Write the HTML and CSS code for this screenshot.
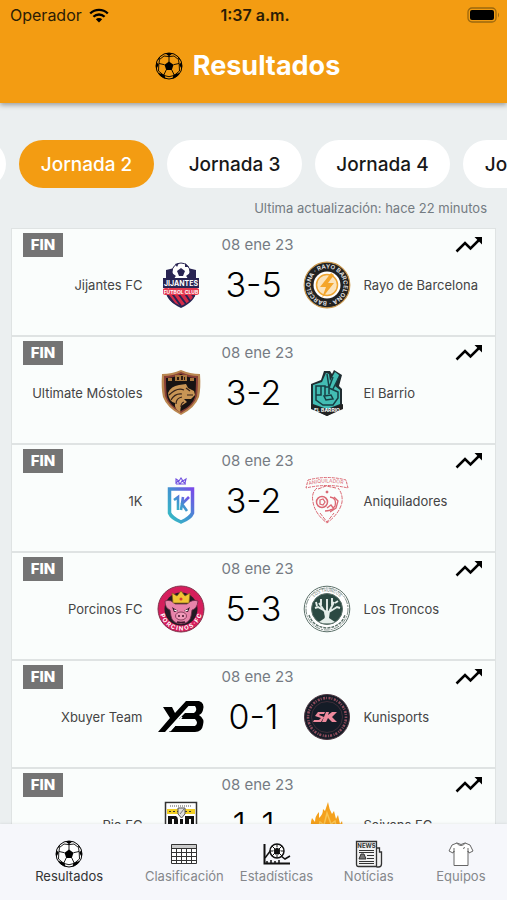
FILE: index.html
```html
<!DOCTYPE html>
<html lang="es">
<head>
<meta charset="utf-8">
<meta name="viewport" content="width=device-width, initial-scale=1">
<title>Resultados</title>
<link rel="stylesheet" href="styles.css">
</head>
<body>
<svg class="defs" aria-hidden="true">
  <symbol id="ball" viewBox="0 0 28 28">
    <clipPath id="ball-clip"><circle cx="14" cy="14" r="13"/></clipPath>
    <g clip-path="url(#ball-clip)" fill="#000">
      <path d="M14 9.4l4.5 3.3-1.7 5.3h-5.6l-1.7-5.3z"/>
      <path d="M9.2.5h9.6L14 4.2zM27.8 9l-.5 9.3-3.1-5.8zM0.2 9l.5 9.3 3.1-5.8zM24 24l-7 4 1.6-5.2 5.6-1.7zM4 24l7 4-1.6-5.2-5.6-1.7zM22.5 3.5l4 5-3.1-1.4zM5.500 3.5l-4 5 3.1-1.4z"/>
      <path d="M14 4v6M9.500 12.700L4 11.500M18.500 12.700L24 11.500M11.200 18l-2.400 5M16.800 18l2.400 5M14 4.600L19 4l4.500 3.500.7 5L24.500 19l-5.500 4.500-5 1.200-5-1.200L3.500 19l.3-6.500.7-5L9 4z" fill="none" stroke="#000" stroke-width=".9"/>
    </g>
    <circle cx="14" cy="14" r="13" fill="none" stroke="#000" stroke-width="1"/>
  </symbol>
  <symbol id="trend" viewBox="0 0 28 18">
    <path d="M1.500 15.500L10 7l5.500 5.500L25 3" fill="none" stroke="#000" stroke-width="2.500"/>
    <path d="M19.500 1H27v7.500z"/>
  </symbol>
</svg>
<div class="app">
  <header class="header">
    <div class="status">
      <div class="carrier">Operador
        <svg class="wifi" viewBox="0 0 20 15"><path d="M1.200 5.500a12.500 12.500 0 0 1 17.600 0M4.400 8.800a8 8 0 0 1 11.200 0" fill="none" stroke="#000" stroke-width="2.300"/><path d="M10 14.500l-3.200-3.200a4.500 4.500 0 0 1 6.400 0z"/></svg>
      </div>
      <time>1:37 a.m.</time>
      <svg class="battery" viewBox="0 0 33 16"><rect x="1" y="1" width="28" height="14" rx="4" fill="none" stroke="#9b680f" stroke-width="1.300"/><rect x="3" y="3" width="24" height="10" rx="2"/><path d="M31 5.500q2 2.500 0 5z" fill="#9b680f"/></svg>
    </div>
    <h1 class="title"><svg class="title-ball"><use href="#ball"/></svg>Resultados</h1>
  </header>

  <main class="content">
    <div class="rounds">
      <button class="round">Jornada 1</button>
      <button class="round active">Jornada 2</button>
      <button class="round">Jornada 3</button>
      <button class="round">Jornada 4</button>
      <button class="round">Jornada 5</button>
    </div>
    <p class="updated">Ultima actualización: hace 22 minutos</p>

    <section class="matches">
      <article class="match">
        <div class="meta"><span class="badge">FIN</span><span class="date">08 ene 23</span><svg class="trend"><use href="#trend"/></svg></div>
        <div class="teams">
          <span class="home">Jijantes FC</span>
          <svg class="crest" viewBox="0 0 48 48">
            <path d="M9 9q8-1 15-5 7 4 15 5v21q0 10-15 17Q9 40 9 30z" fill="#292553"/>
            <path d="M10 30h28q0 9-14 15-14-6-14-15z" fill="#d52b49"/>
            <path d="M14 31l10 14M20 31l9 12M27 31l6 9M10 33l7 9M33 31l4 5" stroke="#292553" stroke-width="2"/>
            <circle cx="24" cy="11" r="9" fill="#fff" stroke="#292553"/>
            <path d="M24 7l4 3-2 5h-4l-2-5zM18 3l4-1-2 4zM28 2l4 4-4 0zM15 12l4 3-3 3zM33 12l-4 3 3 3z" fill="#292553"/>
            <path d="M6 17h36v10H6z" fill="#292553"/>
            <text x="24" y="25" class="jijantes">JIJANTES</text>
            <path d="M6 28l2-1h32l2 1v5l-2 1H8l-2-1z" fill="#e43a50"/>
            <text x="24" y="33" class="jijantes-sub">FÚTBOL CLUB</text>
          </svg>
          <strong class="score">3-5</strong>
          <svg class="crest" viewBox="0 0 48 48">
            <defs><path id="rayo-ring" d="M24 40.500a16.500 16.500 0 1 1 .1 0"/></defs>
            <circle cx="24" cy="24" r="22.800" fill="#222" stroke="#c9964a" stroke-width="1.200"/>
            <circle cx="24" cy="24" r="13.500" fill="#fff"/>
            <circle cx="24" cy="24" r="10.500" fill="#fbe3bb" stroke="#efa631" stroke-width="1.500"/>
            <path d="M28 12l-11 14h6l-4 11 12-15h-6l6-8z" fill="#f4a529"/>
            <text class="rayo"><textPath href="#rayo-ring">BARCELONA · RAYO BARCELONA ·</textPath></text>
          </svg>
          <span class="away">Rayo de Barcelona</span>
        </div>
      </article>

      <article class="match">
        <div class="meta"><span class="badge">FIN</span><span class="date">08 ene 23</span><svg class="trend"><use href="#trend"/></svg></div>
        <div class="teams">
          <span class="home">Ultimate Móstoles</span>
          <svg class="crest" viewBox="0 0 48 48">
            <path d="M5 5q10 0 19-4 9 4 19 4 1 14-1 23-4 11-18 18Q10 39 6 28 4 19 5 5z" fill="#ba8750"/>
            <path d="M7 7q9 0 17-4 8 4 17 4 0 12-1 20-3 10-16 17Q11 37 8 27 7 19 7 7z" fill="#883f36"/>
            <path d="M9 9q8 0 15-4 7 4 15 4 0 12-1 19-3 9-14 14-11-5-14-14Q9 21 9 9z" fill="#171313"/>
            <path d="M18 6h12v6H18zM11 9h4v3h-4zM33 9h4v3h-4z" fill="#a9783e"/>
            <path d="M20 8h2v3h-2zM24 7h2v4h-2zM27 8h1v3h-1z" fill="#2b1b13"/>
            <path d="M11 24q3-7 11-8l7-1 2 4 6 3 1 4-4 4h-7l3 3-6 4-1 6q-6-3-5-9-6-1-7-10z" fill="#c89555"/>
            <path d="M12 26q8-8 15-5M14 31q4-7 11-6M19 35q0-6 6-7M29 19l4 3M30 26l6 0M24 38q0-4 3-5" fill="none" stroke="#35221a" stroke-width="1.200"/>
          </svg>
          <strong class="score">3-2</strong>
          <svg class="crest" viewBox="0 0 48 48">
            <path d="M8 15l10-4 3-9 6 0 2 3 2-4 8 5-3 11 3 3v19L24 47 8 39z" fill="#202d31"/>
            <path d="M10 16l9-3 4-9 3 1 1 7 5-9 4 3-4 11 5 4v14l-13 5-14-5z" fill="#43bdb4"/>
            <path d="M13 17h5v9h-5zM18 17h4v9M22 18h4v7M13 25v6l7 5h10l5-7v-6l-9-4M21 27l7-1 2 4-7 1zM24 5l2 13M30 8l-4 11M36 8l-6 12" fill="none" stroke="#173e43" stroke-width="1.500"/>
            <path d="M8 35l16 6 16-6v5L24 47 8 40z" fill="#222"/>
            <text x="24" y="43" class="barrio">EL BARRIO</text>
          </svg>
          <span class="away">El Barrio</span>
        </div>
      </article>

      <article class="match">
        <div class="meta"><span class="badge">FIN</span><span class="date">08 ene 23</span><svg class="trend"><use href="#trend"/></svg></div>
        <div class="teams">
          <span class="home">1K</span>
          <svg class="crest" viewBox="0 0 48 48">
            <defs><linearGradient id="k-fill" x1="1" y1="0" x2="0" y2="1"><stop stop-color="#794ce9"/><stop offset=".5" stop-color="#4292d0"/><stop offset="1" stop-color="#35bfc3"/></linearGradient></defs>
            <path d="M19 2l3 2 2-3 2 3 3-2-1 4-3-2-2 3-2-3-2 2zM19 7h10" fill="none" stroke="#704fe0" stroke-width="1.100"/>
            <path d="M12.500 12h23v24q-2 5-11.500 9-9.500-4-11.500-9z" fill="#fff" stroke="url(#k-fill)" stroke-width="3.500"/>
            <path d="M17 23l4-3v13M26 20l-2 13M32 20l-7 7 5 7" fill="none" stroke="url(#k-fill)" stroke-width="2.600"/>
          </svg>
          <strong class="score">3-2</strong>
          <svg class="crest" viewBox="0 0 48 48" fill="none" stroke="#db6873">
            <defs><path id="aniq-arch" d="M6 8q18-5 38 0"/></defs>
            <path d="M5 3q19-5 38 0l2 8q-21-5-42 0z" stroke-dasharray="3 1"/>
            <text class="aniq"><textPath href="#aniq-arch">ANIQUILADOR</textPath></text>
            <path d="M14 11q-6 5-4 14 2 12 14 21 13-10 15-21 1-8-4-14M15 12l8-3 10 2M17 36l7 9 7-9" stroke-dasharray="4 1"/>
            <circle cx="19" cy="25" r="5.500" stroke-width="1.500"/>
            <path d="M17 23l3-1 2 3-2 3-3-1zM27 20q7 1 5 9-3 5-10 5M31 20l4 4-2 7-6 4M24 31l4-3 3 4" stroke-width="1.300"/>
            <circle cx="24" cy="15" r="1" fill="#ce4050"/>
          </svg>
          <span class="away">Aniquiladores</span>
        </div>
      </article>

      <article class="match">
        <div class="meta"><span class="badge">FIN</span><span class="date">08 ene 23</span><svg class="trend"><use href="#trend"/></svg></div>
        <div class="teams">
          <span class="home">Porcinos FC</span>
          <svg class="crest" viewBox="0 0 48 48">
            <defs><path id="porc-ring" d="M2.500 24a21.500 21.500 0 0 0 43 0"/></defs>
            <circle cx="24" cy="24" r="23" fill="#d51e5c" stroke="#81324b"/>
            <circle cx="24" cy="24" r="16.500" fill="#211b24"/>
            <path d="M8 16q6-2 10 3h12q5-5 11-3-1 8-6 9l-1 6q-1 7-10 8-9-1-10-8l-1-6q-5-2-5-9z" fill="#e884aa" stroke="#702d4a" stroke-width=".8"/>
            <path d="M15 8l5 3 4-5 4 5 5-3-1 10H16z" fill="#f0c434" stroke="#85611c" stroke-width=".7"/>
            <circle cx="24" cy="14" r="1.500" fill="#d53c35"/>
            <path d="M15 22l6 4-4 1zM33 22l-6 4 4 1z" fill="#2a1723"/>
            <path d="M17 25l3 1M31 25l-3 1" stroke="#fff"/>
            <ellipse cx="24" cy="31" rx="5.500" ry="4" fill="#f19bba" stroke="#702d4a" stroke-width=".8"/>
            <path d="M22 30v2M26 30v2M20 37q4 1 8 0" fill="none" stroke="#41152c" stroke-width="1.500"/>
            <text class="porc"><textPath href="#porc-ring" startOffset="50%">P O R C I N O S · F C</textPath></text>
          </svg>
          <strong class="score">5-3</strong>
          <svg class="crest" viewBox="0 0 48 48">
            <defs><path id="tronc-ring" d="M6.500 24a17.500 17.500 0 0 1 35 0"/></defs>
            <circle cx="24" cy="24" r="22.800" fill="#fff" stroke="#5c716a"/>
            <circle cx="24" cy="24" r="21" fill="none" stroke="#5c716a" stroke-width=".8" stroke-dasharray="6 1 2 1"/>
            <circle cx="24" cy="24" r="15.500" fill="#2b4942" stroke="#5c716a"/>
            <path d="M22 36q2-5 0-10l-7-4-3 1M22 27l-6-9M24 27V14M26 27l5-10M26 27l8-5 3 1M18 20v-6M29 20v-7M32 18l3-2M14 21l-1-4" fill="none" stroke="#e5eeea" stroke-width="1.900"/>
            <path d="M21 26h6l-1 7 6 4q-8 3-16 0l6-4z" fill="#e5eeea"/>
            <path d="M6 30q4 12 18 13 14-1 18-13" fill="none" stroke="#5c716a" stroke-width="1.500" stroke-dasharray="3 1"/>
            <text class="tronc"><textPath href="#tronc-ring" startOffset="50%">LOS TRONCOS</textPath></text>
          </svg>
          <span class="away">Los Troncos</span>
        </div>
      </article>

      <article class="match">
        <div class="meta"><span class="badge">FIN</span><span class="date">08 ene 23</span><svg class="trend"><use href="#trend"/></svg></div>
        <div class="teams">
          <span class="home">Xbuyer Team</span>
          <svg class="crest" viewBox="0 0 48 48">
            <path d="M6 14h9l3 6L29 8h7L8 39H1l12-14z"/>
            <path d="M33 8h9q6 2 4 9-1 4-4 5 6 4 4 10-1 7-8 7H12l6-6h20q4-3 0-7H22l6-6h9q4-3 1-7h-9z"/>
            <path d="M13 38l12-14" stroke="#fafdfc" stroke-width="1.500"/>
          </svg>
          <strong class="score">0-1</strong>
          <svg class="crest" viewBox="0 0 48 48">
            <circle cx="24" cy="24" r="22.500" fill="#151c27" stroke="#4b343f"/>
            <circle cx="24" cy="24" r="19" fill="none" stroke="#8f4c5c" stroke-width="2.600" stroke-dasharray="1 1.500 2 1"/>
            <circle cx="24" cy="24" r="15.500" fill="#151c27" stroke="#513540" stroke-width=".7"/>
            <path d="M22 19h-7l-3 4 6 2-2 2h-5l-1 2h8l3-5-5-2 1-1h4zM26 19h-3l-4 10h4l2-4 4 4h5l-5-5 5-5h-5l-4 3z" fill="#ef8a9d"/>
          </svg>
          <span class="away">Kunisports</span>
        </div>
      </article>

      <article class="match">
        <div class="meta"><span class="badge">FIN</span><span class="date">08 ene 23</span><svg class="trend"><use href="#trend"/></svg></div>
        <div class="teams">
          <span class="home">Pio FC</span>
          <svg class="crest" viewBox="0 0 48 48">
            <path d="M8.500 1.500h31V34L24 46 8.500 34z" fill="#fff" stroke="#333" stroke-width="1.500"/>
            <path d="M10 2h28v1H10z" fill="#d8d8d8"/><path d="M13 5h22" stroke="#555" stroke-dasharray="1 1"/>
            <path d="M10 8h28v5H10z" fill="#f2cf24"/><path d="M12 10.500h24" stroke="#333" stroke-dasharray="2 2"/>
            <path d="M21 7h7v6l-3.500 4L21 13z" fill="#ddd" stroke="#555"/><path d="M23 13l4-5" stroke="#777"/>
            <path d="M11 15h8q2 1 2 4v20h-4V18h-2v16h-4zM23 18h3v24h-3zM28 15h9v20h-3V18h-2v20h-4z" fill="#111"/>
          </svg>
          <strong class="score">1-1</strong>
          <svg class="crest" viewBox="0 0 48 48">
            <path d="M11 34q-5-9-2-17l3 4q0-6 4-10v6q4-3 4-9l2 2 3-9q1 7 4 12l2-3 2 8 2-4 2 9 2-3q2 9-3 17-12 11-25-3z" fill="#f4a11c"/>
            <path d="M15 29l2-8 4 3 3-12 4 11 4-3 2 10" fill="none" stroke="#f8c453" stroke-width="1.500"/>
          </svg>
          <span class="away">Saiyans FC</span>
        </div>
      </article>
    </section>
  </main>

  <nav class="tabbar">
    <a class="tab current" href="#resultados"><svg viewBox="0 0 28 28"><circle cx="14" cy="14" r="13" fill="#fff"/><use href="#ball"/></svg>Resultados</a>
    <a class="tab" href="#clasificacion"><svg viewBox="0 0 28 28"><rect x="1" y="4" width="26" height="20" fill="#fff"/><path d="M1 4h26v4H1z" fill="#ccc"/><path d="M1.500 4.500h25v19h-25zM1 8.500h26M1 12.500h26M1 16.500h26M1 20.500h26M6.500 8v16M11.500 8v16M16.500 8v16M21.500 8v16" fill="none" stroke="#333"/></svg>Clasificación</a>
    <a class="tab" href="#estadisticas"><svg viewBox="0 0 28 28" fill="none" stroke="#111"><path d="M1.500 4v19.500H27" stroke-width="2"/><path d="M2 18L8 10M18 16l4 3 5-3" stroke-width="1.500"/><circle cx="14" cy="11" r="7" fill="#fff" stroke-width="1.500"/><path d="M14 4v3M7 11h3M18 11h3M14 15v3M9 6l3 3M19 6l-3 3M9 16l3-3M19 16l-3-3"/><path d="M14 8l3 2-1 4h-4l-1-4z" fill="#111"/><path d="M4 21v3M8 20v4M12 21v3M16 20v4" stroke-width="1.500"/></svg>Estadísticas</a>
    <a class="tab" href="#noticias"><svg viewBox="0 0 28 28" fill="none" stroke="#333"><path d="M1.500 1.500h20v25h-18q-2 0-2-2zM21.500 8h3v4h2v12q0 3-3 3h-2" fill="#f2f2f2" stroke-width="1.300"/><text x="11.500" y="8" class="news">NEWS</text><path d="M4 10.500h15M4 12.500h15M12 15.500h7M12 18.500h7M4 21.500h15M4 23.500h15"/><path d="M4 19l2-5h3l2 5z" fill="#777"/></svg>Notícias</a>
    <a class="tab" href="#equipos"><svg viewBox="0 0 28 28" fill="#fff" stroke="#666"><path d="M10 3q4 3 8 0l5 2 3 6-4 2-1-2v14.500H7V11l-1 2-4-2 3-6z"/><path d="M9.500 3q4.500 5 9 0M7 12V8M21 12V8M16 8.500l2-1" fill="none"/></svg>Equipos</a>
  </nav>
</div>
</body>
</html>
```
FILE: styles.css
```css
* { box-sizing: border-box; }

body {
  margin: 0;
  font-family: Inter, "Liberation Sans", sans-serif;
  background: #ebeff0;
  color: #111;
}

.defs { position: absolute; width: 0; height: 0; }

.app {
  display: flex;
  flex-direction: column;
  height: 100vh;
  overflow: hidden;
}

.header {
  flex: none;
  padding-bottom: 20px;
  background: #f39c12;
  box-shadow: 0 2px 5px rgba(0, 0, 0, .35);
  z-index: 1;
}

.status {
  display: grid;
  grid-template-columns: 1fr auto 1fr;
  align-items: center;
  height: 30px;
  padding: 0 7px 0 10px;
  font-size: 16px;
  color: #2b1c05;
}
.status time { font-weight: 600; }
.carrier { display: flex; align-items: center; gap: 7px; }
.wifi { width: 20px; height: 15px; }
.battery { width: 33px; height: 16px; justify-self: end; }

.title {
  display: flex;
  align-items: center;
  justify-content: center;
  gap: 10px;
  margin: 19px 12px 0 0;
  font-size: 27px;
  line-height: 34px;
  font-weight: 700;
  color: #fff;
}
.title-ball { width: 28px; height: 28px; }

.content { flex: 1; min-height: 0; overflow: hidden; }

.rounds {
  display: flex;
  gap: 13px;
  margin: 37px 0 0 -129px;
}
.round {
  flex: none;
  width: 135px;
  height: 48px;
  padding: 0;
  border: 0;
  border-radius: 24px;
  background: #fff;
  color: #181818;
  font: 500 19px Inter, "Liberation Sans", sans-serif;
}
.round.active { background: #f39c12; color: #fff; }

.updated {
  margin: 12px 20px 11px;
  font-size: 13px;
  line-height: 17px;
  text-align: right;
  color: #747b82;
}

.matches {
  margin: 0 11px;
  border: 1px solid #dfe3e3;
  border-bottom: 0;
  background: #fafdfc;
}
.match { height: 108px; border-bottom: 2px solid #dfe3e3; }

.meta {
  display: grid;
  grid-template-columns: 1fr auto 1fr;
  align-items: center;
  height: 31px;
  padding: 0 12px 0 11px;
}
.badge {
  justify-self: start;
  width: 40px;
  font-size: 15px;
  line-height: 24px;
  font-weight: 800;
  text-align: center;
  color: #fff;
  background: #747474;
}
.date { padding-left: 9px; font-size: 15px; line-height: 16px; color: #757b83; }
.trend { justify-self: end; width: 28px; height: 18px; }

.teams {
  display: grid;
  grid-template-columns: 1fr 48px 98px 48px 1fr;
  align-items: center;
  height: 50px;
}
.home, .away { font-size: 13px; color: #444; white-space: nowrap; }
.home { padding-right: 14px; text-align: right; }
.away { padding-left: 13px; }
.crest { width: 48px; height: 48px; }
.score { font-size: 34px; line-height: 46px; font-weight: 300; text-align: center; color: #000; }

.jijantes { font-size: 7px; font-weight: 700; fill: #fff; text-anchor: middle; }
.jijantes-sub { font-size: 5px; font-weight: 700; fill: #fff; text-anchor: middle; }
.rayo { font-size: 6px; font-weight: 700; fill: #ddd; }
.barrio { font-size: 5px; font-weight: 700; fill: #fff; text-anchor: middle; }
.aniq { font-size: 5px; fill: #db6873; stroke: none; }
.porc { font-size: 6px; font-weight: 700; fill: #fff; text-anchor: middle; }
.tronc { font-size: 4px; fill: #5c716a; text-anchor: middle; }
.news { font-size: 6px; font-weight: 700; fill: #333; stroke: none; text-anchor: middle; }

.tabbar {
  display: grid;
  grid-template-columns: 3fr 2fr 2fr 2fr 2fr;
  flex: none;
  height: 76px;
  padding-top: 16px;
  background: #f6f7fb;
  box-shadow: 0 -1px 2px rgba(0, 0, 0, .06);
  z-index: 1;
}
.tab {
  display: flex;
  flex-direction: column;
  align-items: center;
  font-size: 13px;
  line-height: 16px;
  color: #85878b;
  text-decoration: none;
}
.tab.current { color: #333; }
.tab svg { width: 28px; height: 28px; }
```
